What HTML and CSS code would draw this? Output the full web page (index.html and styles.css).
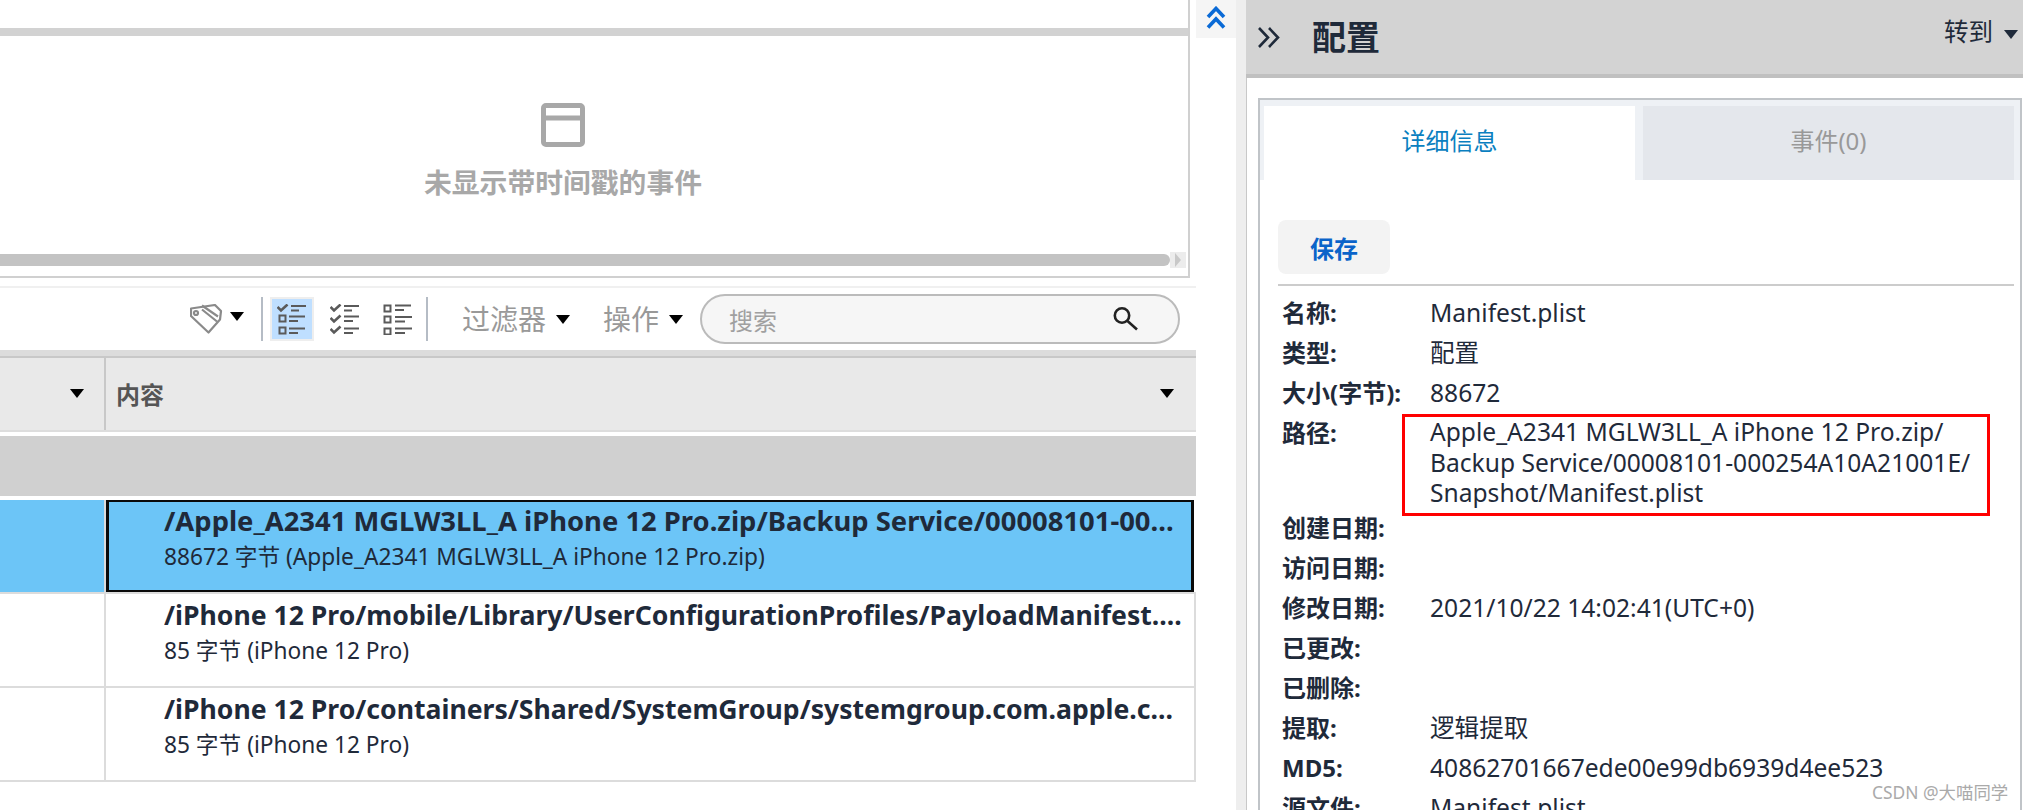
FILE: index.html
```html
<!DOCTYPE html>
<html lang="zh">
<head>
<meta charset="utf-8">
<title>配置</title>
<link rel="stylesheet" href="styles.css">
</head>
<body>
<div class="app">
  <main class="main">
    <section class="timeline">
      <div class="timeline-bar"></div>
      <div class="empty">
        <svg class="empty-icon" viewBox="0 0 44 44"><rect x="2.5" y="2.5" width="39" height="39" rx="2.5"/><path d="M3 15h38"/></svg>
        <div class="empty-text">未显示带时间戳的事件</div>
      </div>
      <div class="hscroll">
        <div class="hscroll-thumb"></div>
        <div class="hscroll-btn"><svg viewBox="0 0 8 16"><path d="M1 1l6 7-6 7z"/></svg></div>
      </div>
    </section>
    <div class="toolbar">
      <svg class="tag-icon" viewBox="0 0 33 30"><path d="M1 4.5l24-3.5 6 6-1 8.5L18.5 28.500 1 12z"/><path d="M12 1.500L28 12.500M12 5.500L27 17.500"/><circle cx="6" cy="9" r="2"/></svg>
      <span class="caret tag-caret"></span>
      <span class="tool-sep"></span>
      <span class="tool-btn tool-btn-active">
        <svg class="list-icon" viewBox="0 0 31 31"><path class="chk" d="M.5 3L4 6.5 10.5.5"/><rect x="2.5" y="11.5" width="6" height="6"/><rect x="2.5" y="23.5" width="6" height="6"/><path d="M14 2h15M14 6.5h8M12 12.5h16M12 17h9M12 24.5h16M12 29h9"/></svg>
      </span>
      <span class="tool-btn">
        <svg class="list-icon" viewBox="0 0 31 31"><path class="chk" d="M.5 3L4 6.5 10.5.5M.5 14L4 17.5 10.5 11.5M.5 25L4 28.5 10.5 22.5"/><path d="M14 2h15M14 6.5h8M14 12.5h15M14 17h9M14 24.5h15M14 29h9"/></svg>
      </span>
      <span class="tool-btn">
        <svg class="list-icon" viewBox="0 0 31 31"><rect x="1.5" y="1.5" width="6" height="6"/><rect x="1.5" y="12.5" width="6" height="6"/><rect x="1.5" y="24.5" width="6" height="6"/><path d="M12 1.5h16M12 6h9M12 13h17M12 17.5h10M12 24.5h17M12 29h10"/></svg>
      </span>
      <span class="tool-sep tool-sep-2"></span>
      <span class="tool-menu filter-menu">过滤器</span>
      <span class="caret"></span>
      <span class="tool-menu action-menu">操作</span>
      <span class="caret"></span>
      <div class="search">
        <span class="search-text">搜索</span>
        <svg class="search-icon" viewBox="0 0 26 26"><circle cx="10" cy="9.500" r="7.200"/><path d="M15.500 15L25 23.500"/></svg>
      </div>
    </div>
    <div class="table">
      <div class="thead">
        <div class="th th-first"><span class="caret"></span></div>
        <div class="th th-content"><span class="th-label">内容</span><span class="caret"></span></div>
      </div>
      <div class="group-row"></div>
      <div class="row row-selected">
        <div class="cell-first"></div>
        <div class="cell-content">
          <div class="row-title">/Apple_A2341 MGLW3LL_A iPhone 12 Pro.zip/Backup Service/00008101-00...</div>
          <div class="row-sub">88672 字节 (Apple_A2341 MGLW3LL_A iPhone 12 Pro.zip)</div>
        </div>
      </div>
      <div class="row">
        <div class="cell-first"></div>
        <div class="cell-content">
          <div class="row-title">/iPhone 12 Pro/mobile/Library/UserConfigurationProfiles/PayloadManifest....</div>
          <div class="row-sub">85 字节 (iPhone 12 Pro)</div>
        </div>
      </div>
      <div class="row">
        <div class="cell-first"></div>
        <div class="cell-content">
          <div class="row-title">/iPhone 12 Pro/containers/Shared/SystemGroup/systemgroup.com.apple.c...</div>
          <div class="row-sub">85 字节 (iPhone 12 Pro)</div>
        </div>
      </div>
    </div>
  </main>
  <div class="collapse-col">
    <div class="collapse-btn">
      <svg viewBox="0 0 20 23"><path d="M2 11l8-8.500 8 8.500M2 21.500l8-8.500 8 8.500"/></svg>
    </div>
  </div>
  <div class="divider"></div>
  <aside class="side">
    <header class="side-head">
      <svg class="side-chevrons" viewBox="0 0 23 23"><path d="M2 2l9 9.5L2 21M12 2l9 9.5L12 21"/></svg>
      <h1 class="side-title">配置</h1>
      <span class="goto">转到</span>
      <span class="caret caret-dark"></span>
    </header>
    <div class="side-body">
      <div class="box">
        <div class="tabs">
          <div class="tab tab-active">详细信息</div>
          <div class="tab">事件(0)</div>
        </div>
        <div class="box-content">
          <button class="save">保存</button>
          <div class="rule"></div>
          <dl class="details">
            <dt>名称:</dt><dd>Manifest.plist</dd>
            <dt>类型:</dt><dd>配置</dd>
            <dt>大小(字节):</dt><dd>88672</dd>
            <dt class="tall">路径:</dt>
            <dd class="tall path">Apple_A2341 MGLW3LL_A iPhone 12 Pro.zip/<br>Backup Service/00008101-000254A10A21001E/<br>Snapshot/Manifest.plist<span class="redbox"></span></dd>
            <dt>创建日期:</dt><dd></dd>
            <dt>访问日期:</dt><dd></dd>
            <dt>修改日期:</dt><dd>2021/10/22 14:02:41(UTC+0)</dd>
            <dt>已更改:</dt><dd></dd>
            <dt>已删除:</dt><dd></dd>
            <dt>提取:</dt><dd>逻辑提取</dd>
            <dt>MD5:</dt><dd>40862701667ede00e99db6939d4ee523</dd>
            <dt>源文件:</dt><dd>Manifest.plist</dd>
          </dl>
        </div>
      </div>
    </div>
  </aside>
</div>
<div class="watermark">CSDN @大喵同学</div>
</body>
</html>
```
FILE: styles.css
```css
* { box-sizing: border-box; }
html, body { margin: 0; padding: 0; height: 810px; overflow: hidden; background: #fff; }
body {
  font-family: "Noto Sans", "Noto Sans CJK SC", sans-serif;
  color: #1f2a3a;
  position: relative;
}
.app { display: flex; height: 810px; overflow: hidden; }

/* main column */
.main { width: 1196px; flex: none; display: flex; flex-direction: column; }

.timeline {
  width: 1190px; height: 278px; flex: none;
  border-right: 2px solid #d0d0d0;
  border-bottom: 2px solid #d0d0d0;
  padding-top: 28px;
  display: flex; flex-direction: column;
}
.timeline-bar { height: 8px; background: #d2d2d2; flex: none; }
.empty {
  height: 216px; flex: none;
  padding-right: 62px;
  display: flex; flex-direction: column; align-items: center;
}
.empty-icon { width: 44px; height: 44px; margin-top: 67px; fill: none; stroke: #a8a8a8; stroke-width: 5; }
.empty-text { margin-top: 15px; font-size: 27.8px; line-height: 40px; font-weight: 700; color: #a8a8a8; white-space: nowrap; }
.hscroll { display: flex; align-items: center; height: 16px; flex: none; }
.hscroll-thumb { width: 1170px; height: 12px; background: #c3c3c3; border-radius: 0 6px 6px 0; }
.hscroll-btn { width: 16px; height: 16px; background: #ececec; display: flex; justify-content: center; }
.hscroll-btn svg { width: 8px; height: 16px; fill: #c8c8c8; }

/* toolbar */
.toolbar {
  height: 64px; flex: none;
  margin-top: 8px;
  border-top: 2px solid #f0f0f0;
  display: flex; align-items: center;
  padding-left: 190px;
}
.tag-icon { width: 33px; height: 30px; fill: none; stroke: #8a8a8a; stroke-width: 2.2; stroke-linejoin: round; flex: none; }
.caret {
  width: 0; height: 0; flex: none;
  border-left: 7px solid transparent;
  border-right: 7px solid transparent;
  border-top: 9px solid #000;
}
.tag-caret { margin-left: 7px; position: relative; top: -3px; }
.tool-sep { width: 2px; height: 44px; background: #b5bcc5; margin-left: 17px; flex: none; }
.tool-sep-2 { margin-left: 6px; }
.tool-btn {
  width: 44px; height: 44px; margin-left: 7px; flex: none;
  display: flex; align-items: center; justify-content: center;
  border: 2px solid transparent;
}
.tool-btn + .tool-btn { margin-left: 9px; }
.tool-btn-active { background: #bfdfff; border-color: #eee; }
.list-icon { width: 31px; height: 31px; fill: none; stroke: #5a5a5a; stroke-width: 2; }
.list-icon .chk { stroke-width: 2.6; }
.tool-menu { font-size: 28px; line-height: 40px; color: #999; white-space: nowrap; }
.filter-menu { margin-left: 34px; margin-right: 10px; }
.action-menu { margin-left: 33px; margin-right: 10px; }
.search {
  width: 480px; height: 50px; margin-left: 17px; flex: none;
  border: 2px solid #bbb; border-radius: 25px;
  background: #f6f6f6;
  display: flex; align-items: center; justify-content: space-between;
  padding: 0 40px 0 27px;
}
.search-text { font-size: 24px; color: #a0a0a0; }
.search-icon { width: 26px; height: 26px; fill: none; stroke: #222; stroke-width: 2.6; }

/* table */
.thead {
  display: flex; height: 82px;
  border-top: 6px solid #dcdcdc;
  border-bottom: 2px solid #ddd;
  background: #e9e9e9;
  box-shadow: inset 0 2px 0 #c8c8c8;
}
.th { display: flex; align-items: center; justify-content: space-between; }
.th-first { width: 106px; flex: none; border-right: 2px solid #c8c8c8; padding: 0 22px 0 70px; }
.th-content { flex: 1; padding: 0 22px 0 10px; }
.th-label { font-size: 24px; font-weight: 700; color: #555; }
.group-row { height: 60px; margin-top: 4px; background: #d0d0d0; }
.row { display: flex; height: 94px; border-bottom: 2px solid #dcdcdc; }
.row-selected { margin-top: 4px; }
.cell-first { width: 106px; flex: none; border-right: 2px solid #dcdcdc; }
.cell-content {
  flex: 1; min-width: 0;
  padding: 3px 0 0 58px;
  border-right: 2px solid #dcdcdc;
}
.row-selected .cell-first { background: #6cc5f7; }
.row-selected .cell-content {
  background: #6cc5f7;
  border: solid #0a0a0a; border-width: 2px 3px;
  margin-right: 2px;
  padding: 1px 0 0 55px;
}
.row-title { font-size: 26.6px; line-height: 36px; font-weight: 700; white-space: nowrap; overflow: hidden; }
.row-selected .row-title { font-size: 27.4px; }
.row-sub { font-size: 22.7px; line-height: 36px; white-space: nowrap; overflow: hidden; }

/* collapse */
.collapse-col { width: 40px; flex: none; }
.collapse-btn { height: 38px; background: #f5f5f5; display: flex; justify-content: center; padding-top: 6px; }
.collapse-btn svg { width: 20px; height: 23px; fill: none; stroke: #0a6ad6; stroke-width: 3.6; }
.divider { width: 10px; flex: none; background: #eee; }

/* side */
.side { flex: 1; min-width: 0; display: flex; flex-direction: column; }
.side-head {
  height: 78px; flex: none;
  background: #d3d3d3;
  border-bottom: 4px solid #c0c0c0;
  display: flex; align-items: center;
  padding-left: 11px;
}
.side-chevrons { width: 23px; height: 23px; fill: none; stroke: #1f2a3a; stroke-width: 2.6; flex: none; }
.side-title { margin: 0 0 0 32px; font-size: 34px; font-weight: 700; line-height: 50px; }
.goto { margin-left: auto; font-size: 24.5px; line-height: 34px; position: relative; top: -5px; }
.caret-dark { border-top-color: #1f2a3a; margin-left: 11px; margin-right: 5px; position: relative; top: -3px; }
.side-body { flex: 1; border-left: 1px solid #c8c8c8; padding: 20px 1px 0 11px; min-height: 0; }
.box { border: 2px solid #c0c4c8; height: 760px; }
.tabs { display: flex; gap: 8px; height: 80px; padding: 6px 6px 0 4px; background: #eef1f5; }
.tab {
  flex: 1; display: flex; align-items: center; justify-content: center;
  padding-bottom: 7px;
  background: #e4e7ec; color: #999; font-size: 24px;
}
.tab-active { background: #fff; color: #0a7fc0; }
.box-content { padding: 40px 6px 0 18px; }
.save {
  display: block; width: 112px; height: 54px; padding: 0;
  border: 0; border-radius: 8px; background: #f3f3f3;
  color: #0a63c9; font: 700 24px "Noto Sans", "Noto Sans CJK SC", sans-serif;
}
.rule { height: 2px; margin-top: 10px; background: #ccc; }
.details {
  margin: 7px 0 0; padding-left: 4px;
  display: grid; grid-template-columns: 148px 1fr; grid-auto-rows: auto;
  font-size: 24px; line-height: 31px;
}
.details dt { font-weight: 700; min-height: 40px; padding-top: 4px; white-space: nowrap; }
.details dd { margin: 0; min-height: 40px; padding-top: 4px; font-size: 24.6px; white-space: nowrap; position: relative; }
.details .tall { height: 95px; }
.details dd.path { line-height: 30.5px; }
.redbox {
  position: absolute; left: -28px; top: 1px;
  width: 588px; height: 102px;
  border: 3px solid #f00;
}
.watermark {
  position: absolute; left: 1872px; top: 780px;
  font-size: 17.4px; line-height: 24px; color: #aaa; white-space: nowrap;
}
```
